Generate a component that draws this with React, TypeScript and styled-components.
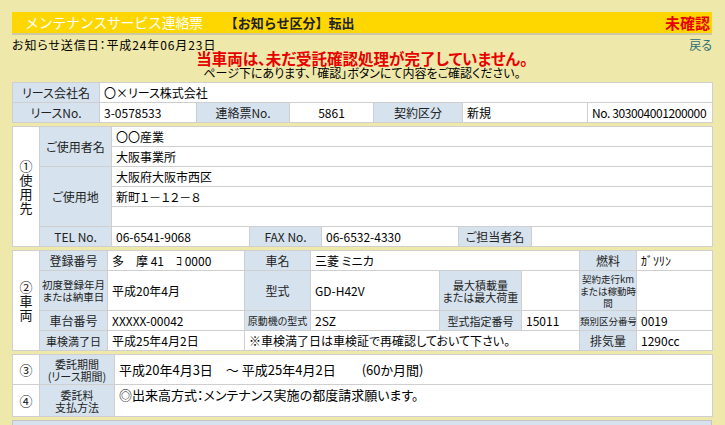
import React from 'react';
import styled, { createGlobalStyle } from 'styled-components';

const Global = createGlobalStyle`
  html, body { margin: 0; padding: 0; background: #eee8aa; }
  body {
    font-family: "Noto Sans CJK JP", "Noto Sans", sans-serif;
    font-size: 12px;
    color: #000;
    font-feature-settings: "palt";
  }
`;

const Page = styled.div`
  width: 700px;
  padding: 12px 13px 0 12px;
`;

const TitleBar = styled.div`
  display: flex;
  align-items: center;
  height: 21px;
  background: #ffd700;
  box-shadow: 0 2px 0 #cdc8a8;
  padding: 0 2px 0 13px;
`;

const TitleMain = styled.span`
  color: #fff;
  font-size: 14px;
  letter-spacing: -0.3px;
  line-height: 21px;
  font-feature-settings: normal;
`;

const TitleKind = styled.span`
  color: #222;
  font-size: 13px;
  font-weight: bold;
  margin-left: 22px;
  font-feature-settings: normal;
`;

const Status = styled.span`
  margin-left: auto;
  color: #e60000;
  font-weight: bold;
  font-size: 15px;
`;

const InfoRow = styled.div`
  display: flex;
  justify-content: space-between;
  margin-top: 5px;
  line-height: 13px;
`;

const SentDate = styled.span`
  letter-spacing: 0.9px;
`;

const BackLink = styled.a`
  color: #2f6f78;
  text-decoration: none;
  cursor: pointer;
`;

const Notice = styled.div`
  text-align: center;
  margin-bottom: 2px;
`;

const NoticeRed = styled.div`
  color: #e60000;
  font-weight: bold;
  font-size: 15.5px;
  line-height: 15px;
`;

const NoticeSub = styled.div`
  font-size: 12px;
  line-height: 12px;
  margin-top: 1px;
`;

const Sheet = styled.table`
  width: 700px;
  table-layout: fixed;
  border-collapse: collapse;
  background: #fff;
  border: 1px solid #c4c4c4;
  margin-top: 3px;
  font-size: 12px;
`;

const Label = styled.td<{ $size?: number }>`
  background: #d6e3ee;
  border: 1px solid #cfcfcf;
  text-align: center;
  vertical-align: middle;
  font-size: ${(p) => p.$size ?? 12}px;
  line-height: ${(p) => (p.$size && p.$size < 12 ? 12 : 14)}px;
  color: #222;
  padding: 0;
  height: 19px;
  white-space: nowrap;
  overflow: hidden;
`;

const Value = styled.td<{ $align?: 'left' | 'center'; $size?: number; $top?: boolean; $tight?: boolean }>`
  border: 1px solid #cfcfcf;
  text-align: ${(p) => p.$align ?? 'left'};
  vertical-align: ${(p) => (p.$top ? 'top' : 'middle')};
  padding: ${(p) => (p.$top ? '3px 4px 0' : '0 4px')};
  font-size: ${(p) => p.$size ?? 12}px;
  letter-spacing: ${(p) => (p.$tight ? '-0.4px' : 'normal')};
  line-height: 14px;
  height: 19px;
  white-space: nowrap;
  overflow: hidden;
`;

const HalfKana = styled.span`
  font-feature-settings: normal;
`;

const Num = styled.td`
  border: 1px solid #cfcfcf;
  text-align: center;
  vertical-align: middle;
  font-size: 13px;
  line-height: 14px;
  padding: 0;
  color: #111;
`;

const NextBox = styled.div`
  margin-top: 3px;
  height: 30px;
  background: #d6e3ee;
  border: 1px solid #c4c4c4;
`;

export default function App() {
  return (
    <>
      <Global />
      <Page>
        <TitleBar>
          <TitleMain>メンテナンスサービス連絡票</TitleMain>
          <TitleKind>【お知らせ区分】転出</TitleKind>
          <Status>未確認</Status>
        </TitleBar>
        <InfoRow>
          <SentDate>お知らせ送信日：平成24年06月23日</SentDate>
          <BackLink>戻る</BackLink>
        </InfoRow>
        <Notice>
          <NoticeRed>当車両は、未だ受託確認処理が完了していません。</NoticeRed>
          <NoticeSub>ページ下にあります、「確認」ボタンにて内容をご確認ください。</NoticeSub>
        </Notice>

        <Sheet>
          <colgroup>
            <col style={{ width: 87 }} />
            <col style={{ width: 97 }} />
            <col style={{ width: 93 }} />
            <col style={{ width: 84 }} />
            <col style={{ width: 89 }} />
            <col style={{ width: 125 }} />
            <col style={{ width: 125 }} />
          </colgroup>
          <tbody>
            <tr>
              <Label>リース会社名</Label>
              <Value colSpan={6}>〇×リース株式会社</Value>
            </tr>
            <tr>
              <Label>リースNo.</Label>
              <Value>3-0578533</Value>
              <Label>連絡票No.</Label>
              <Value $align="center">5861</Value>
              <Label>契約区分</Label>
              <Value>新規</Value>
              <Value $tight>No.&nbsp;303004001200000</Value>
            </tr>
          </tbody>
        </Sheet>

        <Sheet>
          <colgroup>
            <col style={{ width: 27 }} />
            <col style={{ width: 72 }} />
            <col style={{ width: 138 }} />
            <col style={{ width: 72 }} />
            <col style={{ width: 137 }} />
            <col style={{ width: 73 }} />
            <col style={{ width: 181 }} />
          </colgroup>
          <tbody>
            <tr>
              <Num rowSpan={6}>
                ①<br />使<br />用<br />先
              </Num>
              <Label rowSpan={2}>ご使用者名</Label>
              <Value colSpan={5}>〇〇産業</Value>
            </tr>
            <tr>
              <Value colSpan={5}>大阪事業所</Value>
            </tr>
            <tr>
              <Label rowSpan={3}>ご使用地</Label>
              <Value colSpan={5}>大阪府大阪市西区</Value>
            </tr>
            <tr>
              <Value colSpan={5}>新町１－１２－８</Value>
            </tr>
            <tr>
              <Value colSpan={5}></Value>
            </tr>
            <tr>
              <Label>TEL No.</Label>
              <Value>06-6541-9068</Value>
              <Label>FAX No.</Label>
              <Value>06-6532-4330</Value>
              <Label>ご担当者名</Label>
              <Value></Value>
            </tr>
          </tbody>
        </Sheet>

        <Sheet>
          <colgroup>
            <col style={{ width: 27 }} />
            <col style={{ width: 68 }} />
            <col style={{ width: 137 }} />
            <col style={{ width: 66 }} />
            <col style={{ width: 129 }} />
            <col style={{ width: 82 }} />
            <col style={{ width: 58 }} />
            <col style={{ width: 57 }} />
            <col style={{ width: 76 }} />
          </colgroup>
          <tbody>
            <tr>
              <Num rowSpan={4}>
                ②<br />車<br />両
              </Num>
              <Label>登録番号</Label>
              <Value>多　摩 41　ｺ 0000</Value>
              <Label>車名</Label>
              <Value colSpan={3}>三菱 ミニカ</Value>
              <Label>燃料</Label>
              <Value>
                <HalfKana>ｶﾞｿﾘﾝ</HalfKana>
              </Value>
            </tr>
            <tr>
              <Label $size={10.5} style={{ height: 39 }}>
                初度登録年月
                <br />
                または納車日
              </Label>
              <Value>平成20年4月</Value>
              <Label>型式</Label>
              <Value>GD-H42V</Value>
              <Label $size={11}>
                最大積載量
                <br />
                または最大荷重
              </Label>
              <Value></Value>
              <Label $size={9.5}>
                契約走行km
                <br />
                または稼動時
                <br />間
              </Label>
              <Value></Value>
            </tr>
            <tr>
              <Label>車台番号</Label>
              <Value>XXXXX-00042</Value>
              <Label $size={10}>原動機の型式</Label>
              <Value>2SZ</Value>
              <Label $size={11}>型式指定番号</Label>
              <Value>15011</Value>
              <Label $size={9.5}>類別区分番号</Label>
              <Value>0019</Value>
            </tr>
            <tr>
              <Label $size={11}>車検満了日</Label>
              <Value>平成25年4月2日</Value>
              <Value colSpan={4}>※車検満了日は車検証で再確認しておいて下さい。</Value>
              <Label>排気量</Label>
              <Value>1290cc</Value>
            </tr>
          </tbody>
        </Sheet>

        <Sheet>
          <colgroup>
            <col style={{ width: 27 }} />
            <col style={{ width: 75 }} />
            <col style={{ width: 598 }} />
          </colgroup>
          <tbody>
            <tr>
              <Num style={{ height: 29 }}>③</Num>
              <Label $size={11}>
                委託期間
                <br />
                (リース期間)
              </Label>
              <Value $size={13}>平成20年4月3日　～ 平成25年4月2日　　(60か月間)</Value>
            </tr>
            <tr>
              <Num style={{ height: 31 }}>④</Num>
              <Label $size={11}>
                委託料
                <br />
                支払方法
              </Label>
              <Value $size={13} $top>
                ◎出来高方式：メンテナンス実施の都度請求願います。
              </Value>
            </tr>
          </tbody>
        </Sheet>

        <NextBox />
      </Page>
    </>
  );
}
